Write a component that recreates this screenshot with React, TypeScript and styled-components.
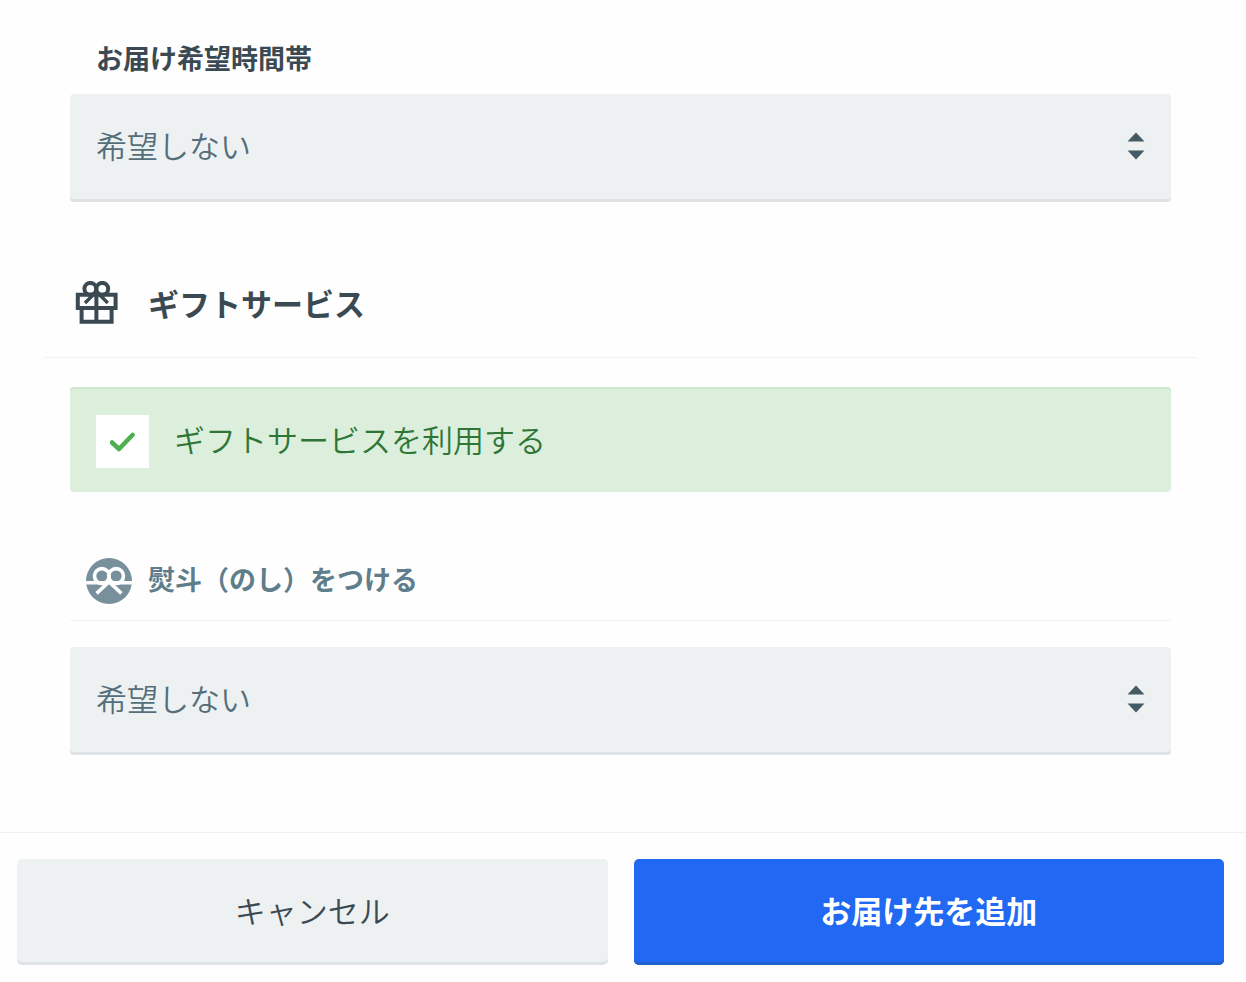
import React from "react";
import styled, { createGlobalStyle } from "styled-components";

const GlobalStyle = createGlobalStyle`
  *, *::before, *::after { box-sizing: border-box; }
  body {
    margin: 0;
    background: #fefefe;
    color: #3b4a52;
    font-family: "Noto Sans CJK JP", sans-serif;
  }
  button, select, input { font: inherit; color: inherit; margin: 0; }
`;

const Form = styled.form`
  width: 100%;
`;

const Fields = styled.div`
  padding: 39px 75px 77px 70px;
`;

const FieldLabel = styled.label`
  display: block;
  padding-left: 26px;
  margin-bottom: 17px;
  font-size: 27px;
  line-height: 38px;
  font-weight: 700;
`;

const SelectBox = styled.div`
  position: relative;
`;

const Select = styled.select`
  display: block;
  width: 100%;
  height: 108px;
  padding: 0 70px 8px 26px;
  appearance: none;
  border: 0;
  border-radius: 4px;
  background: #eef1f2;
  box-shadow: inset 0 -3px 0 #dfe3e5;
  color: #546e7a;
  font-size: 31px;
  font-weight: 350;
`;

const Arrows = styled.svg`
  position: absolute;
  top: 38px;
  right: 26px;
  pointer-events: none;
`;

const SectionTitle = styled.h2`
  display: flex;
  align-items: center;
  gap: 29px;
  height: 108px;
  margin: 48px -26px 29px;
  padding: 0 0 2px 31px;
  border-bottom: 1px solid #f0f2f3;
  font-size: 31px;
  font-weight: 700;
`;

const SubTitle = styled.h3`
  height: 81px;
  margin: 48px 0 26px;
  padding: 2px 0 0 16px;
  border-bottom: 1px solid #f0f2f3;
  color: #607d8b;
  font-size: 27px;
  font-weight: 700;
`;

const SubTitleLabel = styled.label`
  display: flex;
  align-items: center;
  gap: 16px;
  height: 100%;
`;

const CheckRow = styled.label`
  display: flex;
  align-items: center;
  gap: 25px;
  height: 105px;
  padding: 4px 26px 0;
  border-radius: 4px;
  background: #dcefdc;
  box-shadow: inset 0 2px 0 #cfe6d0;
  color: #2f7636;
  font-size: 31px;
  font-weight: 350;
`;

const CheckBox = styled.span`
  display: grid;
  width: 53px;
  height: 53px;
  place-items: center;
  background: #fff;

  > * { grid-area: 1 / 1; }
  > svg { pointer-events: none; visibility: hidden; }
  > input:checked + svg { visibility: visible; }
`;

const CheckInput = styled.input`
  width: 100%;
  height: 100%;
  appearance: none;
`;

const IconText = styled.span`
  padding-bottom: 6px;
`;

const Footer = styled.footer`
  display: flex;
  gap: 26px;
  padding: 26px 22px 17px 17px;
  border-top: 1px solid #eef0f1;
`;

const Button = styled.button<{ $primary?: boolean }>`
  flex: 1 1 0;
  height: 106px;
  padding: 0 16px 6px;
  border: 0;
  border-radius: 5px;
  background: ${(p) => (p.$primary ? "#2168f3" : "#eef1f2")};
  box-shadow: inset 0 -3px 0 ${(p) => (p.$primary ? "#2160cf" : "#dfe3e5")};
  color: ${(p) => (p.$primary ? "#fff" : "#3b4a52")};
  font-size: 31px;
  font-weight: ${(p) => (p.$primary ? 700 : 350)};
`;

const SelectArrows = () => (
  <Arrows width="18" height="28" viewBox="0 0 18 28" fill="#455a64" aria-hidden="true">
    <path d="M0.5 9.5 L9 0.5 L17.5 9.5 Z" />
    <path d="M0.5 18.5 L9 27.5 L17.5 18.5 Z" />
  </Arrows>
);

const GiftIcon = () => (
  <svg width="44" height="44" viewBox="0 0 44 44" fill="none" stroke="#3b4a52" strokeWidth="4" aria-hidden="true">
    <circle cx="15.3" cy="7.8" r="5.9" />
    <circle cx="27.3" cy="7.8" r="5.9" />
    <path d="M2.8 13.8 H40.6 V27 H2.8 Z" />
    <path d="M6.6 27 V40.8 H36.6 V27 M21.4 11 V40.8" />
    <path d="M19.5 12.5 L10 22 M23.3 12.5 L32.8 22" strokeWidth="3.4" />
  </svg>
);

const NoshiIcon = () => (
  <svg width="46" height="46" viewBox="0 0 46 46" aria-hidden="true">
    <circle cx="23" cy="23" r="23" fill="#78909c" />
    <g fill="none" stroke="#fff" strokeWidth="3.6">
      <circle cx="15.9" cy="18" r="7.4" />
      <circle cx="30.1" cy="18" r="7.4" />
      <path d="M0 24.8 H18 M28 24.8 H46" />
      <path d="M25 22 L10.6 35.4 M21 22 L35.4 35.4" />
    </g>
  </svg>
);

export default function App() {
  return (
    <>
      <GlobalStyle />
      <Form onSubmit={(e) => e.preventDefault()}>
        <Fields>
          <FieldLabel htmlFor="time">お届け希望時間帯</FieldLabel>
          <SelectBox>
            <Select id="time">
              <option>希望しない</option>
            </Select>
            <SelectArrows />
          </SelectBox>

          <SectionTitle>
            <GiftIcon />
            ギフトサービス
          </SectionTitle>

          <CheckRow htmlFor="gift">
            <CheckBox>
              <CheckInput id="gift" type="checkbox" defaultChecked />
              <svg width="26" height="20" viewBox="0 0 26 20" fill="none" stroke="#4caf50" strokeWidth="4.6" aria-hidden="true">
                <path d="M2 10.5 L9 17 L22.5 3" strokeLinejoin="round" strokeLinecap="round" />
              </svg>
            </CheckBox>
            <IconText>ギフトサービスを利用する</IconText>
          </CheckRow>

          <SubTitle>
            <SubTitleLabel htmlFor="noshi">
              <NoshiIcon />
              <IconText>熨斗（のし）をつける</IconText>
            </SubTitleLabel>
          </SubTitle>
          <SelectBox>
            <Select id="noshi">
              <option>希望しない</option>
            </Select>
            <SelectArrows />
          </SelectBox>
        </Fields>

        <Footer>
          <Button type="button">キャンセル</Button>
          <Button type="submit" $primary>お届け先を追加</Button>
        </Footer>
      </Form>
    </>
  );
}
